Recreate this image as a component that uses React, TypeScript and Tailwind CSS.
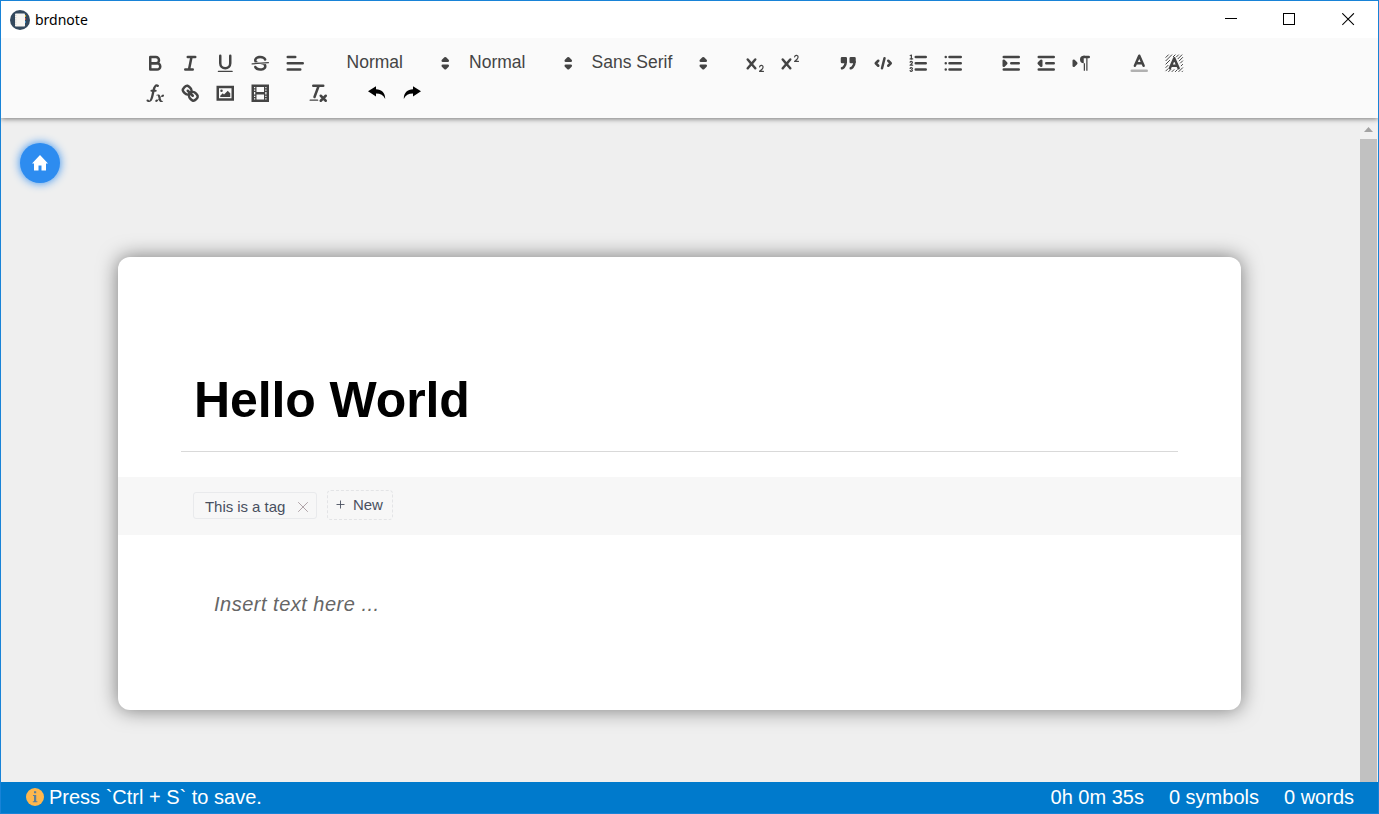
import type { ReactNode } from 'react';

function Icon({ children }: { children: ReactNode }) {
  return (
    <button className="flex h-[30px] w-[35px] items-center justify-center">
      <svg
        viewBox="0 0 18 18"
        className="h-[22.5px] w-[22.5px] fill-none stroke-[#444] stroke-2 [stroke-linecap:round] [stroke-linejoin:round] [&_.f]:fill-[#444] [&_.n]:stroke-none [&_.t]:stroke-1"
      >
        {children}
      </svg>
    </button>
  );
}

function Group({ children }: { children: ReactNode }) {
  return <div className="mr-[22.8px] flex">{children}</div>;
}

function Picker({ label, className }: { label: string; className: string }) {
  return (
    <button className={`flex h-[30px] items-center pl-[11.25px] pr-[1.25px] text-[#444] ${className}`}>
      <span className="-mt-0.5 flex-1 text-left text-[17.5px] leading-[30px] whitespace-nowrap">{label}</span>
      <svg viewBox="0 0 18 18" className="h-[22.5px] w-[22.5px] fill-[#444] stroke-[#444] stroke-2 [stroke-linejoin:round]">
        <polygon points="7 11 9 13 11 11 7 11" />
        <polygon points="7 7 9 5 11 7 7 7" />
      </svg>
    </button>
  );
}

const SCRIPT_X =
  'M9.65,5.241a1,1,0,0,0-1.409.108L6,7.964,3.759,5.349A1,1,0,0,0,2.192,6.59178Q2.21541,6.6213,2.241,6.649L4.684,9.5,2.241,12.35A1,1,0,0,0,3.71,13.70722q0.02557-.02768.049-0.05722L6,11.036,8.241,13.65a1,1,0,1,0,1.567-1.24277Q9.78459,12.3777,9.759,12.35L7.316,9.5,9.759,6.651A1,1,0,0,0,9.65,5.241Z';

function TitleBar() {
  return (
    <header className="relative z-20 flex h-[37px] shrink-0 items-center justify-between bg-white pl-[9px] text-black">
      <div className="flex items-center gap-[5px]">
        <svg viewBox="0 0 20 20" className="h-5 w-5">
          <circle cx="10" cy="10" r="10" fill="#34495e" />
          <rect x="5" y="3.5" width="10" height="13" rx="0.8" fill="#f7f5f2" />
          <path d="M15 5h.8v2H15z" fill="#f0c419" />
          <path d="M15 8h.8v2H15z" fill="#e64c3c" />
          <path d="M15 11h.8v2H15z" fill="#3b97d3" />
          <path d="M5.8 5v10" stroke="#b8b5b0" strokeWidth="0.8" strokeDasharray="1 1.2" />
        </svg>
        <span className="font-['Noto_Sans','Open_Sans',sans-serif] text-[14px] leading-5">brdnote</span>
      </div>
      <div className="flex pr-[23px]">
        <svg viewBox="0 0 13 13" className="mr-[45px] h-[13px] w-[13px]" shapeRendering="crispEdges">
          <path d="M0 5.5h12" stroke="#000" />
        </svg>
        <svg viewBox="0 0 13 13" className="mr-[46px] h-[13px] w-[13px]" shapeRendering="crispEdges">
          <path d="M.5.5h11v11H.5z" fill="none" stroke="#000" />
        </svg>
        <svg viewBox="0 0 13 13" className="h-[13px] w-[13px]">
          <path d="M.3.3l11.6 11.6M11.9.3L.3 11.9" stroke="#000" strokeWidth="1.1" />
        </svg>
      </div>
    </header>
  );
}

function Toolbar() {
  return (
    <div className="relative z-10 h-20 shrink-0 bg-[#fafafa] pt-[9.75px] pl-[136.5px] shadow-[0_1px_5px_rgba(0,0,0,0.5)]">
      <div className="flex">
        <Group>
          <Icon>
            <path d="M5,4H9.5A2.5,2.5,0,0,1,12,6.5v0A2.5,2.5,0,0,1,9.5,9H5Z" />
            <path d="M5,9h5.5A2.5,2.5,0,0,1,13,11.5v0A2.5,2.5,0,0,1,10.5,14H5Z" />
          </Icon>
          <Icon>
            <path d="M7 4H13M5 14H11M8 14L10 4" />
          </Icon>
          <Icon>
            <path d="M5,3V9a4.012,4.012,0,0,0,4,4H9a4.012,4.012,0,0,0,4-4V3" />
            <rect className="f n" x="3" y="15" width="12" height="1" rx="0.5" />
          </Icon>
          <Icon>
            <path className="t" d="M15.5 8.5L2.5 9.5" />
            <path className="f n" d="M9.007,8C6.542,7.791,6,7.519,6,6.5,6,5.792,7.283,5,9,5c1.571,0,2.765.679,2.969,1.309a1,1,0,0,0,1.9-.617C13.356,4.106,11.354,3,9,3,6.2,3,4,4.538,4,6.5a3.2,3.2,0,0,0,.5,1.843Z" />
            <path className="f n" d="M8.984,10C11.457,10.208,12,10.479,12,11.5c0,0.708-1.283,1.5-3,1.5-1.571,0-2.765-.679-2.969-1.309a1,1,0,1,0-1.9.617C4.644,13.894,6.646,15,9,15c2.8,0,5-1.538,5-3.5a3.2,3.2,0,0,0-.5-1.843Z" />
          </Icon>
          <Icon>
            <path d="M3 9H15M3 14H13M3 4H9" />
          </Icon>
        </Group>
        <Group>
          <Picker label="Normal" className="w-[122.5px]" />
          <Picker label="Normal" className="w-[122.5px]" />
          <Picker label="Sans Serif" className="w-[135px]" />
        </Group>
        <Group>
          <Icon>
            <path className="f n" d="M15.5,15H13.861a3.858,3.858,0,0,0,1.914-2.975,1.8,1.8,0,0,0-1.6-1.751A1.921,1.921,0,0,0,12.021,11.7a0.50013,0.50013,0,1,0,.957.291h0a0.914,0.914,0,0,1,1.053-.725,0.81,0.81,0,0,1,.744.762c0,1.076-1.16971,1.86982-1.93971,2.43082A1.45639,1.45639,0,0,0,12,15.5a0.5,0.5,0,0,0,.5.5h3A0.5,0.5,0,0,0,15.5,15Z" />
            <path className="f n" d={SCRIPT_X} />
          </Icon>
          <Icon>
            <path className="f n" d="M15.5,7H13.861a4.015,4.015,0,0,0,1.914-2.975,1.8,1.8,0,0,0-1.6-1.751A1.922,1.922,0,0,0,12.021,3.7a0.5,0.5,0,1,0,.957.291,0.917,0.917,0,0,1,1.053-.725,0.81,0.81,0,0,1,.744.762c0,1.077-1.164,1.925-1.934,2.486A1.423,1.423,0,0,0,12,7.5a0.5,0.5,0,0,0,.5.5h3A0.5,0.5,0,0,0,15.5,7Z" />
            <path className="f n" d={SCRIPT_X} />
          </Icon>
        </Group>
        <Group>
          <Icon>
            <rect className="f" x="4" y="5" width="3" height="3" />
            <rect className="f" x="11" y="5" width="3" height="3" />
            <path className="f" d="M7,8c0,4.031-3,5-3,5" fillRule="evenodd" />
            <path className="f" d="M14,8c0,4.031-3,5-3,5" fillRule="evenodd" />
          </Icon>
          <Icon>
            <path d="M5 7L3 9L5 11M13 7L15 9L13 11M10 5L8 13" />
          </Icon>
          <Icon>
            <path d="M7 4H15M7 9H15M7 14H15" />
            <path className="t" d="M2.5 5.5H4.5" />
            <path className="f n" d="M3.5,6A0.5,0.5,0,0,1,3,5.5V3.085l-0.276.138A0.5,0.5,0,0,1,2.053,3c-0.124-.247-0.023-0.324.224-0.447l1-.5A0.5,0.5,0,0,1,4,2.5v3A0.5,0.5,0,0,1,3.5,6Z" />
            <path className="t" d="M4.5,10.5h-2c0-.234,1.85-1.076,1.85-2.234A0.959,0.959,0,0,0,2.5,8.156" />
            <path className="t" d="M2.5,14.846a0.959,0.959,0,0,0,1.85-.109A0.7,0.7,0,0,0,3.75,14a0.688,0.688,0,0,0,.6-0.736,0.959,0.959,0,0,0-1.85-.109" />
          </Icon>
          <Icon>
            <path d="M6 4H15M6 9H15M6 14H15M3 4H3M3 9H3M3 14H3" />
          </Icon>
        </Group>
        <Group>
          <Icon>
            <path d="M3 14H15M3 4H15M9 9H15" />
            <path className="f" d="M3 7V11L5 9Z" />
          </Icon>
          <Icon>
            <path d="M3 14H15M3 4H15M9 9H15" />
            <path className="f" d="M5 7V11L3 9Z" />
          </Icon>
          <Icon>
            <path className="f" d="M3 11L5 9L3 7Z" />
            <path d="M15 4H11" />
            <path className="f n" d="M11,3a3,3,0,0,0,0,6h1V3H11ZM11 4h1v11h-1zM13 4h1v11h-1z" />
          </Icon>
        </Group>
        <Group>
          <Icon>
            <path d="M3 15H15" opacity="0.4" />
            <path d="M5.5 11L9 3L12.5 11M11.63 9H6.38" />
          </Icon>
          <Icon>
            <path
              className="[stroke-width:0.8]"
              d="M2.3 4.3L4.3 2.3M2.3 7L7 2.3M2.3 9.7L5.3 6.7M8.2 3.8L9.7 2.3M2.3 12.4L4 10.7M10.8 3.9L12.4 2.3M12 5.4L15.1 2.3M13 7.1L15.7 4.4M14 8.8L15.7 7.1M2.3 15.1L4 13.4M4.5 15.7L6.3 13.9M7.2 15.7L8.8 14.1M9.9 15.7L11.4 14.2M12.6 15.7L15.7 12.6M14.5 11.1L15.7 9.9M15.3 15.7L15.7 15.3"
            />
            <path d="M5.5 13L9 5L12.5 13M11.63 11H6.38" />
          </Icon>
        </Group>
      </div>
      <div className="flex">
        <Group>
          <Icon>
            <path className="f n" d="M11.759,2.482a2.561,2.561,0,0,0-3.53.607A7.656,7.656,0,0,0,6.8,6.2C6.109,9.188,5.275,14.677,4.15,14.927a1.545,1.545,0,0,0-1.3-.933A0.922,0.922,0,0,0,2,15.036S1.954,16,4.119,16s3.091-2.691,3.7-5.553c0.177-.826.36-1.726,0.554-2.6L8.775,6.2c0.381-1.421.807-2.521,1.306-2.676a1.014,1.014,0,0,0,1.02.56A0.966,0.966,0,0,0,11.759,2.482Z" />
            <rect className="f n" x="5.15" y="6.2" width="5" height="1.6" rx="0.8" />
            <path className="f n" d="M13.663,12.027a1.662,1.662,0,0,1,.266-0.276q0.193,0.069.456,0.138a2.1,2.1,0,0,0,.535.069,1.075,1.075,0,0,0,.767-0.3,1.044,1.044,0,0,0,.314-0.8,0.84,0.84,0,0,0-.238-0.619,0.8,0.8,0,0,0-.594-0.239,1.154,1.154,0,0,0-.781.3,4.607,4.607,0,0,0-.781,1q-0.091.15-.218,0.346l-0.246.38c-0.068-.288-0.137-0.582-0.212-0.885-0.459-1.847-2.494-.984-2.941-0.8-0.482.2-.353,0.647-0.094,0.529a0.869,0.869,0,0,1,1.281.585c0.217,0.751.377,1.436,0.527,2.038a5.688,5.688,0,0,1-.362.467,2.69,2.69,0,0,1-.264.271q-0.221-.08-0.471-0.147a2.029,2.029,0,0,0-.522-0.066,1.079,1.079,0,0,0-.768.3A1.058,1.058,0,0,0,9,15.131a0.82,0.82,0,0,0,.832.852,1.134,1.134,0,0,0,.787-0.3,5.11,5.11,0,0,0,.776-0.993q0.141-.219.215-0.34c0.046-.076.122-0.194,0.223-0.346a2.786,2.786,0,0,0,.918,1.726,2.582,2.582,0,0,0,2.376-.185c0.317-.181.212-0.565,0-0.494A0.807,0.807,0,0,1,14.176,15a5.159,5.159,0,0,1-.913-2.446l0,0Q13.487,12.24,13.663,12.027Z" />
          </Icon>
          <Icon>
            <path d="M7 7L11 11" />
            <path d="M8.9,4.577a3.476,3.476,0,0,1,.36,4.679A3.476,3.476,0,0,1,4.577,8.9C3.185,7.5,2.035,6.4,4.217,4.217S7.5,3.185,8.9,4.577Z" />
            <path d="M13.423,9.1a3.476,3.476,0,0,0-4.679-.36,3.476,3.476,0,0,0,.36,4.679c1.392,1.392,2.5,2.542,4.679.36S14.815,10.5,13.423,9.1Z" />
          </Icon>
          <Icon>
            <rect x="3" y="4" width="12" height="10" className="[stroke-linejoin:miter]" />
            <circle className="f n" cx="6" cy="7" r="1" />
            <path className="f n" d="M5 12V11L7 9L8 10L11 7L13 9V12Z" />
          </Icon>
          <Icon>
            <rect x="3" y="3" width="12" height="12" className="[stroke-linejoin:miter]" />
            <path className="f n" d="M5 3h1v12H5zM12 3h1v12h-1zM5 8h8v2H5zM3 5h3v1H3zM3 7h3v1H3zM3 10h3v1H3zM3 12h3v1H3zM12 5h3v1h-3zM12 7h3v1h-3zM12 10h3v1h-3zM12 12h3v1h-3z" />
          </Icon>
        </Group>
        <Group>
          <Icon>
            <path d="M5 3H13M6 12L9.35 3M11 11L15 15M15 11L11 15" />
            <rect className="f n" x="2" y="14" width="7" height="1" rx="0.5" />
          </Icon>
        </Group>
        <Group>
          <button className="flex h-[30px] w-[35px] items-center justify-center pl-[3px]">
            <svg viewBox="0 0 18 14" className="h-[14px] w-[18px] fill-black">
              <path d="M0 5.3L8 .2V3.2C13.5 3.4 17.3 6.5 17.2 13C15.5 9.3 12.5 7.6 8 7.6V10.5Z" />
            </svg>
          </button>
          <button className="flex h-[30px] w-[35px] items-center justify-center pl-[2px]">
            <svg viewBox="0 0 18 14" className="h-[14px] w-[18px] fill-black">
              <path d="M18 5.3L10 .2V3.2C4.5 3.4.7 6.5.8 13C2.5 9.3 5.5 7.6 10 7.6V10.5Z" />
            </svg>
          </button>
        </Group>
      </div>
    </div>
  );
}

function Note() {
  return (
    <article className="flex h-[453px] w-[1123px] flex-col rounded-[12px] bg-white shadow-[0_0_20px_rgba(0,0,0,0.5)]">
      <div className="mx-[63px] h-[195px] border-b border-[#d9d9d9] pt-[113px] pl-[13px]">
        <h1 className="text-[50px] leading-[60px] font-bold tracking-[-0.1px] text-black">Hello World</h1>
      </div>
      <div className="mt-[25px] flex h-[58px] bg-[#f7f7f7] pl-[75px] text-[15px] tracking-[-0.05px] text-[#495060]">
        <div className="mt-[15px] flex h-[27px] w-[124px] items-center justify-between rounded-[3px] border border-[#e9eaec] pr-[7px] pl-[11px]">
          <span className="pt-[3px]">This is a tag</span>
          <svg viewBox="0 0 12 12" className="mt-[2px] h-3 w-3">
            <path d="M1.2 1.2l9.6 9.6M10.8 1.2L1.2 10.8" stroke="#b0a4a8" strokeWidth="1" />
          </svg>
        </div>
        <button className="mt-[13px] ml-[10px] flex h-[30px] w-[66px] items-center rounded-[4px] border border-dashed border-[#e3e4e6] pl-2">
          <svg viewBox="0 0 9 9" className="mr-2 -mt-0.5 h-[9px] w-[9px]">
            <path d="M.5 4.5h8M4.5.5v8" stroke="#495060" strokeWidth="0.9" />
          </svg>
          New
        </button>
      </div>
      <p className="mt-[54px] ml-24 text-[20px] leading-[30px] tracking-[0.5px] text-[#666] italic">Insert text here ...</p>
    </article>
  );
}

export default function App() {
  return (
    <div className="flex h-[814px] w-[1379px] flex-col overflow-hidden border border-[#1883d7] bg-white font-['Liberation_Sans',Arial,sans-serif]">
      <TitleBar />
      <Toolbar />
      <main className="flex min-h-0 flex-1 bg-[#efefef]">
        <div className="relative flex-1 pt-[139px] pl-[117px]">
          <button className="absolute top-[25px] left-[19px] flex h-10 w-10 items-center justify-center rounded-full bg-[#2d8cf0] shadow-[0_0_10px_#2d8cf0]">
            <svg viewBox="0 0 16 16" className="h-4 w-4 fill-white">
              <path d="M8 0L16 8.5H14V15.5H9.5V10.5H6.5V15.5H2V8.5H0Z" />
            </svg>
          </button>
          <Note />
        </div>
        <div className="mr-px flex w-[17px] flex-col bg-[#f1f1f1]">
          <div className="flex h-[21px] items-center justify-center pt-[2px]">
            <svg viewBox="0 0 9 5" className="h-[5px] w-[9px] fill-[#a3a3a3]">
              <path d="M4.5 0L9 5H0Z" />
            </svg>
          </div>
          <div className="flex-1 bg-[#c1c1c1]" />
        </div>
      </main>
      <footer className="flex h-[31px] shrink-0 items-center justify-between bg-[#007acc] pr-6 pl-[25px] text-[20px] leading-[30px] text-white">
        <div className="flex items-center gap-[5px]">
          <svg viewBox="0 0 18 18" className="-mt-0.5 h-[18px] w-[18px]">
            <circle cx="9" cy="9" r="9" fill="#ffb74d" />
            <path d="M8 3.3h2.2v2H8zM7 7h3.2v6.2h1.2v1H6.8v-1H8V8H7z" fill="#5c7f9c" />
          </svg>
          <span className="-mt-0.5">Press `Ctrl + S` to save.</span>
        </div>
        <div className="-mt-0.5 flex gap-[25px]">
          <span>0h 0m 35s</span>
          <span>0 symbols</span>
          <span>0 words</span>
        </div>
      </footer>
    </div>
  );
}
